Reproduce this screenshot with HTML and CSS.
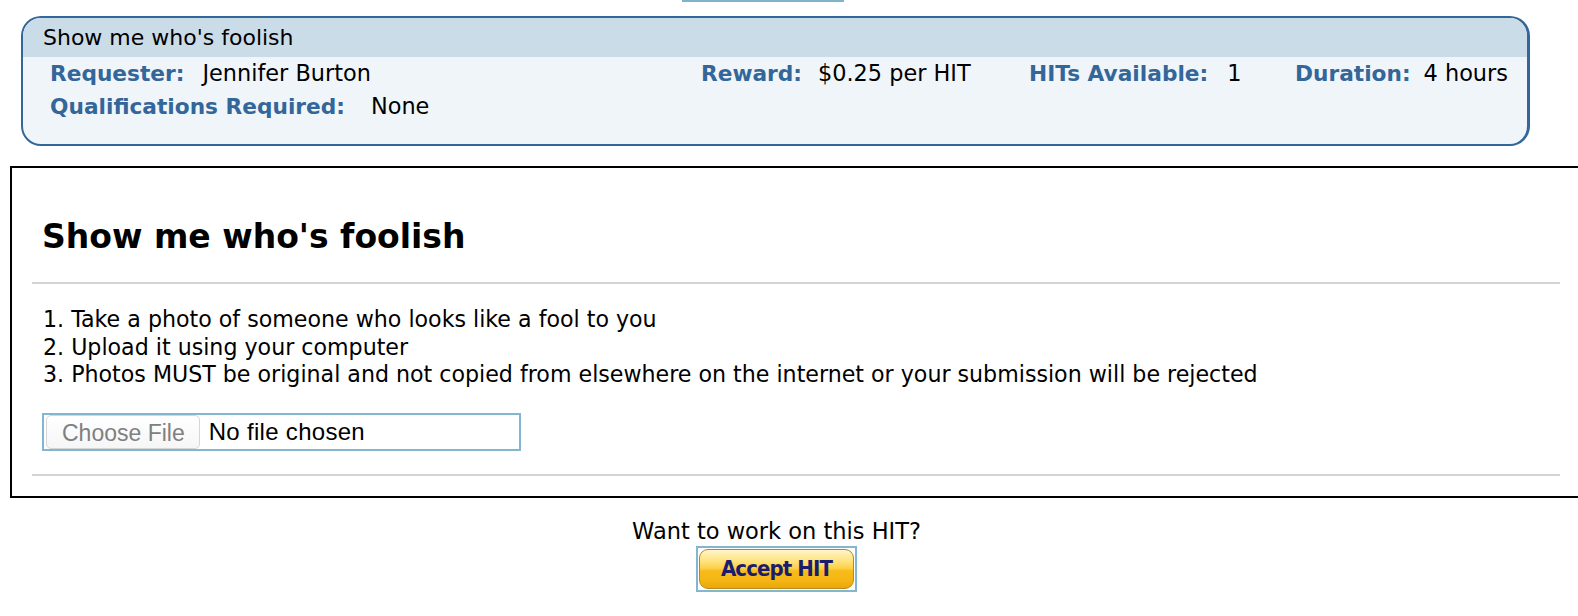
FILE: index.html
```html
<!DOCTYPE html>
<html>
<head>
<meta charset="utf-8">
<title>Show me who's foolish</title>
<link rel="stylesheet" href="styles.css">
</head>
<body>
<div class="page">
  <div class="topmark"></div>
  <div class="capsule">
    <div class="capsule-head">Show me who's foolish</div>
    <div class="capsule-row cols">
      <div class="pair"><span class="lbl">Requester:</span><span class="val v-req">Jennifer Burton</span></div>
      <div class="pair"><span class="lbl">Reward:</span><span class="val v-rew">$0.25 per HIT</span></div>
      <div class="pair"><span class="lbl">HITs Available:</span><span class="val v-hits">1</span></div>
      <div class="pair"><span class="lbl">Duration:</span><span class="val v-dur">4 hours</span></div>
    </div>
    <div class="capsule-row">
      <div class="pair"><span class="lbl">Qualifications Required:</span><span class="val v-qual">None</span></div>
    </div>
  </div>

  <div class="task">
    <h1 class="task-title">Show me who's foolish</h1>
    <div class="rule"></div>
    <div class="steps">
      <div>1. Take a photo of someone who looks like a fool to you</div>
      <div>2. Upload it using your computer</div>
      <div>3. Photos MUST be original and not copied from elsewhere on the internet or your submission will be rejected</div>
    </div>
    <div class="file">
      <span class="file-btn">Choose File</span>
      <span class="file-name">No file chosen</span>
    </div>
    <div class="rule rule-bottom"></div>
  </div>

  <div class="footer">
    <div class="ask">Want to work on this HIT?</div>
    <span class="accept-wrap"><span class="accept">Accept HIT</span></span>
  </div>
</div>
</body>
</html>
```

FILE: styles.css
```css
html, body {
  margin: 0;
  padding: 0;
  background: #ffffff;
  overflow: hidden;
}

.page {
  width: 1600px;
  font-family: "DejaVu Sans", Verdana, sans-serif;
  color: #000;
}

.topmark {
  width: 162px;
  height: 2px;
  margin-left: 682px;
  background: #7fb3cc;
}

.capsule {
  margin: 14px 0 0 21px;
  width: 1509px;
  height: 130px;
  box-sizing: border-box;
  border: 2px solid #336699;
  border-right-width: 3px;
  border-radius: 20px;
  background: #f0f5fa;
  overflow: hidden;
}

.capsule-head {
  background: #cbdce9;
  height: 39px;
  line-height: 39px;
  padding-left: 20px;
  font-size: 22px;
}

.capsule-row {
  height: 33px;
  line-height: 33px;
  padding-left: 27px;
  display: flex;
  font-size: 21.7px;
}

.capsule-row.cols {
  display: grid;
  grid-template-columns: 651px 328px 266px auto;
}

.pair {
  white-space: nowrap;
}

.lbl {
  font-weight: bold;
  color: #336699;
}

.val {
  font-size: 22.4px;
}

.v-req { margin-left: 18px; }
.v-rew { margin-left: 16px; }
.v-hits { margin-left: 19px; }
.v-dur { margin-left: 13px; }
.v-qual { margin-left: 26px; }

.task {
  margin: 20px 0 0 10px;
  width: 1572px;
  box-sizing: border-box;
  border: 2px solid #000;
  padding: 0 20px 20px 20px;
}

.task-title {
  margin: 49px 0 0 10px;
  font-size: 33px;
  line-height: 40px;
  font-weight: bold;
}

.rule {
  height: 2px;
  background: #d3d3d3;
  margin-top: 25px;
}

.steps {
  margin: 22px 0 0 11px;
  font-size: 22.15px;
  line-height: 27.5px;
}

.file {
  margin: 24px 0 0 10px;
  width: 479px;
  height: 38px;
  box-sizing: border-box;
  border: 2px solid #84b6d0;
  display: flex;
  align-items: center;
  padding-left: 2px;
  font-family: "Liberation Sans", Arial, sans-serif;
  font-size: 23px;
}

.file-btn {
  height: 34px;
  line-height: 34px;
  box-sizing: border-box;
  padding: 0 14px 0 15px;
  border: 1px solid #d6d6d6;
  border-radius: 5px;
  background: linear-gradient(#ffffff, #f6f6f6);
  color: #808080;
}

.file-name {
  margin-left: 9px;
  font-size: 24px;
  letter-spacing: 0.3px;
}

.rule-bottom {
  margin-top: 23px;
}

.footer {
  width: 1553px;
  text-align: center;
  padding-top: 20px;
}

.ask {
  font-size: 22.5px;
  line-height: 26px;
}

.accept-wrap {
  display: inline-block;
  margin-top: 2px;
  width: 161px;
  height: 46px;
  box-sizing: border-box;
  border: 2px solid #84b6d0;
  padding: 1px;
}

.accept {
  display: block;
  height: 40px;
  box-sizing: border-box;
  border: 1px solid #b88a1a;
  border-radius: 9px;
  background: linear-gradient(#fff5cc 0%, #ffe27a 30%, #fdd04a 48%, #f7bb1a 55%, #f5b614 80%, #eaa70c 100%);
  color: #1c1c6c;
  font-family: "DejaVu Sans Condensed", "DejaVu Sans", sans-serif;
  font-stretch: condensed;
  font-weight: bold;
  font-size: 22px;
  line-height: 37px;
  letter-spacing: -0.9px;
}
```
